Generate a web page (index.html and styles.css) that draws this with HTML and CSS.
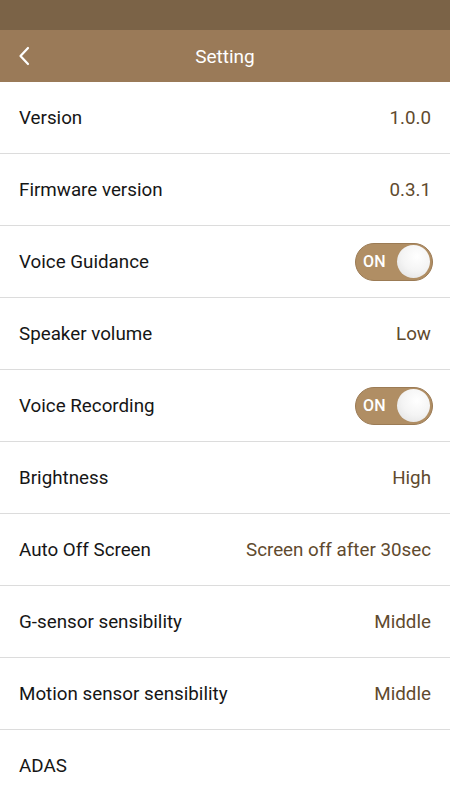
FILE: index.html
```html
<!DOCTYPE html>
<html>
<head>
<meta charset="utf-8">
<link rel="stylesheet" href="styles.css">
</head>
<body>
<div class="status"></div>
<header class="topbar">
  <svg class="back" width="12" height="20" viewBox="0 0 12 20"><path d="M10 2 L2.5 10 L10 18" fill="none" stroke="#fff" stroke-width="2.2" stroke-linecap="round" stroke-linejoin="round"/></svg>
  <div class="title">Setting</div>
</header>
<ul class="list">
  <li class="row"><span class="label">Version</span><span class="value">1.0.0</span></li>
  <li class="row"><span class="label">Firmware version</span><span class="value">0.3.1</span></li>
  <li class="row"><span class="label">Voice Guidance</span><span class="toggle"><span class="on">ON</span><span class="knob"></span></span></li>
  <li class="row"><span class="label">Speaker volume</span><span class="value">Low</span></li>
  <li class="row"><span class="label">Voice Recording</span><span class="toggle"><span class="on">ON</span><span class="knob"></span></span></li>
  <li class="row"><span class="label">Brightness</span><span class="value">High</span></li>
  <li class="row"><span class="label">Auto Off Screen</span><span class="value">Screen off after 30sec</span></li>
  <li class="row"><span class="label">G-sensor sensibility</span><span class="value">Middle</span></li>
  <li class="row"><span class="label">Motion sensor sensibility</span><span class="value">Middle</span></li>
  <li class="row"><span class="label">ADAS</span></li>
</ul>
</body>
</html>
```
FILE: styles.css
```css
html, body {
  margin: 0;
  padding: 0;
  background: #fff;
  font-family: Roboto, "Liberation Sans", sans-serif;
  overflow: hidden;
  height: 800px;
}
.status {
  height: 30px;
  background: #7b6347;
}
.topbar {
  height: 52px;
  background: #9a7a58;
  display: flex;
  align-items: center;
  justify-content: center;
  position: relative;
}
.back {
  position: absolute;
  left: 18px;
  top: 16px;
}
.title {
  color: #fff;
  font-size: 19px;
  font-weight: 400;
}
.list {
  list-style: none;
  margin: 0;
  padding: 0;
}
.row {
  height: 71px;
  border-bottom: 1px solid #dcdcdc;
  display: flex;
  align-items: center;
  justify-content: space-between;
  padding: 0 19px;
  font-size: 18.8px;
  font-weight: 400;
}
.label {
  color: #161616;
}
.value {
  color: #5f4a2e;
}
.toggle {
  width: 78px;
  height: 38px;
  box-sizing: border-box;
  border-radius: 19px;
  background: #b08e64;
  border: 1.5px solid #9b7b55;
  display: flex;
  align-items: center;
  justify-content: space-between;
  padding: 0 2px 0 7px;
  margin-right: -2px;
}
.on {
  color: #fff;
  font-weight: 500;
  font-size: 16px;
  letter-spacing: 0.3px;
}
.knob {
  width: 33px;
  height: 33px;
  border-radius: 50%;
  background: radial-gradient(circle at 60% 35%, #ffffff 0%, #f4f4f4 50%, #dedede 100%);
}
```
